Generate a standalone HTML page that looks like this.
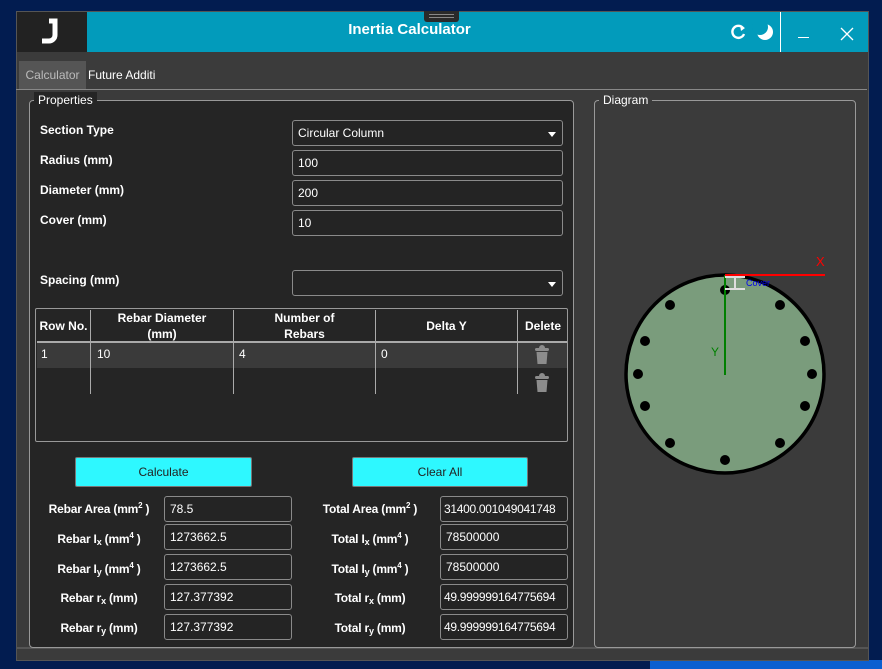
<!DOCTYPE html>
<html><head><meta charset="utf-8"><style>
*{box-sizing:border-box;margin:0;padding:0}
body{width:882px;height:669px;background:#021c50;position:relative;overflow:hidden;font-family:"Segoe UI","Liberation Sans",sans-serif;color:#fff}
.a{position:absolute}
.win{left:16px;top:11px;width:853px;height:650px;background:#3b3b3b;border:1px solid #555}
.lbl{font-size:12px;font-weight:bold;color:#fff}
.inp{position:absolute;border:1px solid #8a8a8a;border-radius:3px;background:#242424;font-size:12px;padding:0 5px;line-height:24px;height:26px;color:#fff}
.dd::after{content:"";position:absolute;right:6px;top:11px;border-left:4px solid transparent;border-right:4px solid transparent;border-top:5px solid #fff}
.btn{position:absolute;background:#2ef8ff;border:1px solid #777;border-radius:2px;color:#222;font-size:12px;text-align:center;line-height:28px;height:30px}
.r{text-align:center;font-size:12px;font-weight:bold;width:130px;letter-spacing:-0.2px}
.cell{position:absolute;font-size:12px}
.hdr{position:absolute;font-size:12px;font-weight:bold;text-align:center;line-height:16px}
sub{font-size:9px;vertical-align:-2px}sup{font-size:8px}
</style></head><body>
<div class="a" style="left:650px;top:660px;width:232px;height:9px;background:#0b5fd0"></div>
<div class="a win"></div>
<div class="a" style="left:17px;top:12px;width:70px;height:40px;background:#222"></div>
<svg class="a" style="left:38px;top:18px" width="24" height="28"><path d="M11 3h6v14a6 6 0 0 1-6 6H4" stroke="#fff" stroke-width="5" fill="none"/></svg>
<div class="a" style="left:87px;top:12px;width:781px;height:40px;background:#029bbb"></div>
<div class="a" style="left:424px;top:11px;width:35px;height:11px;background:#2a2a2a;border-radius:0 0 3px 3px"></div>
<div class="a" style="left:429px;top:14px;width:25px;height:1px;background:#888"></div>
<div class="a" style="left:429px;top:17px;width:25px;height:1px;background:#888"></div>
<div class="a" style="left:87px;top:21px;width:645px;text-align:center;font-size:15px;font-weight:bold">Inertia Calculator</div>
<svg class="a" style="left:728px;top:23px" width="50" height="18"><path d="M15 5 A6 6 0 1 0 16 11" stroke="#fff" stroke-width="2.4" fill="none"/><path d="M12 2 L17 5 L13 8Z" fill="#fff"/><circle cx="37" cy="9" r="8" fill="#fff"/><circle cx="32" cy="4" r="8" fill="#029bbb"/></svg>
<div class="a" style="left:780px;top:12px;width:1px;height:40px;background:#fff"></div>
<div class="a" style="left:798px;top:37px;width:11px;height:1px;background:#fff"></div>
<svg class="a" style="left:840px;top:27px" width="14" height="14"><path d="M1 1L13 13M13 1L1 13" stroke="#fff" stroke-width="1.3"/></svg>
<div class="a" style="left:19px;top:61px;width:67px;height:28px;background:#555;color:#bbb;font-size:12px;line-height:28px;text-align:center">Calculator</div>
<div class="a" style="left:88px;top:61px;font-size:12px;line-height:28px">Future Additi</div>
<div class="a" style="left:16px;top:89px;width:851px;height:1px;background:#888"></div>
<div class="a" style="left:17px;top:647px;width:851px;height:2px;background:#555"></div>
<div class="a" style="left:29px;top:100px;width:545px;height:548px;background:#252525;border:1px solid #999;border-radius:4px"></div>
<div class="a" style="left:34px;top:92px;background:#252525;padding:0 4px;font-size:12px;line-height:16px">Properties</div>
<div class="a lbl" style="left:40px;top:123px">Section Type</div>
<div class="a lbl" style="left:40px;top:153px">Radius (mm)</div>
<div class="a lbl" style="left:40px;top:183px">Diameter (mm)</div>
<div class="a lbl" style="left:40px;top:213px">Cover (mm)</div>
<div class="a lbl" style="left:40px;top:273px">Spacing (mm)</div>
<div class="inp dd" style="left:292px;top:120px;width:271px">Circular Column</div>
<div class="inp" style="left:292px;top:150px;width:271px">100</div>
<div class="inp" style="left:292px;top:180px;width:271px">200</div>
<div class="inp" style="left:292px;top:210px;width:271px">10</div>
<div class="inp dd" style="left:292px;top:270px;width:271px"></div>
<div class="a" style="left:35px;top:308px;width:533px;height:134px;border:1px solid #999;border-radius:2px"></div>
<div class="a" style="left:37px;top:341px;width:530px;height:2px;background:#aaa"></div>
<div class="a" style="left:37px;top:343px;width:530px;height:25px;background:#3a3a3a"></div>
<div class="a" style="left:90px;top:310px;width:1px;height:84px;background:#aaa"></div>
<div class="a" style="left:233px;top:310px;width:1px;height:84px;background:#aaa"></div>
<div class="a" style="left:375px;top:310px;width:1px;height:84px;background:#aaa"></div>
<div class="a" style="left:517px;top:310px;width:1px;height:84px;background:#aaa"></div>
<div class="hdr" style="left:37px;top:318px;width:53px">Row No.</div>
<div class="hdr" style="left:91px;top:310px;width:142px">Rebar Diameter<br>(mm)</div>
<div class="hdr" style="left:234px;top:310px;width:141px">Number of<br>Rebars</div>
<div class="hdr" style="left:376px;top:318px;width:141px">Delta Y</div>
<div class="hdr" style="left:518px;top:318px;width:50px">Delete</div>
<div class="cell" style="left:41px;top:347px">1</div>
<div class="cell" style="left:97px;top:347px">10</div>
<div class="cell" style="left:239px;top:347px">4</div>
<div class="cell" style="left:381px;top:347px">0</div>
<svg class="a" style="left:534px;top:344px" width="16" height="48"><g fill="#8c8c8c"><rect x="1" y="4" width="14" height="3" rx="1.5"/><path d="M5 4a3 3 0 0 1 6 0z"/><path d="M2.5 8h11l-1 12h-9z"/><rect x="1" y="32" width="14" height="3" rx="1.5"/><path d="M5 32a3 3 0 0 1 6 0z"/><path d="M2.5 36h11l-1 12h-9z"/></g></svg>
<div class="btn" style="left:75px;top:457px;width:177px">Calculate</div>
<div class="btn" style="left:352px;top:457px;width:176px">Clear All</div>
<div class="a r" style="left:34px;top:501px">Rebar Area (mm<sup>2</sup> )</div>
<div class="a r" style="left:34px;top:531px">Rebar I<sub>x</sub> (mm<sup>4</sup> )</div>
<div class="a r" style="left:34px;top:561px">Rebar I<sub>y</sub> (mm<sup>4</sup> )</div>
<div class="a r" style="left:34px;top:591px">Rebar r<sub>x</sub> (mm)</div>
<div class="a r" style="left:34px;top:621px">Rebar r<sub>y</sub> (mm)</div>
<div class="inp" style="left:164px;top:496px;width:128px">78.5</div>
<div class="inp" style="left:164px;top:524px;width:128px">1273662.5</div>
<div class="inp" style="left:164px;top:554px;width:128px">1273662.5</div>
<div class="inp" style="left:164px;top:584px;width:128px">127.377392</div>
<div class="inp" style="left:164px;top:614px;width:128px">127.377392</div>
<div class="a r" style="left:305px;top:501px">Total Area (mm<sup>2</sup> )</div>
<div class="a r" style="left:305px;top:531px">Total I<sub>x</sub> (mm<sup>4</sup> )</div>
<div class="a r" style="left:305px;top:561px">Total I<sub>y</sub> (mm<sup>4</sup> )</div>
<div class="a r" style="left:305px;top:591px">Total r<sub>x</sub> (mm)</div>
<div class="a r" style="left:305px;top:621px">Total r<sub>y</sub> (mm)</div>
<div class="inp" style="left:440px;top:496px;width:128px;padding:0 3px;letter-spacing:-0.3px">31400.001049041748</div>
<div class="inp" style="left:440px;top:524px;width:128px">78500000</div>
<div class="inp" style="left:440px;top:554px;width:128px">78500000</div>
<div class="inp" style="left:440px;top:584px;width:128px;padding:0 3px;letter-spacing:-0.3px">49.999999164775694</div>
<div class="inp" style="left:440px;top:614px;width:128px;padding:0 3px;letter-spacing:-0.3px">49.999999164775694</div>
<div class="a" style="left:594px;top:100px;width:262px;height:548px;border:1px solid #999;border-radius:4px"></div>
<div class="a" style="left:599px;top:92px;background:#3b3b3b;padding:0 4px;font-size:12px;line-height:16px">Diagram</div>
<svg class="a" style="left:594px;top:240px" width="262" height="240">
<circle cx="131" cy="134" r="99" fill="#7a9c7c" stroke="#000" stroke-width="3.5"/>
<g fill="#000">
<circle cx="131" cy="50" r="5"/><circle cx="131" cy="220" r="5"/>
<circle cx="44" cy="134" r="5"/><circle cx="218" cy="134" r="5"/>
<circle cx="76" cy="65" r="5"/><circle cx="186" cy="65" r="5"/>
<circle cx="51" cy="101" r="5"/><circle cx="211" cy="101" r="5"/>
<circle cx="51" cy="166" r="5"/><circle cx="211" cy="166" r="5"/>
<circle cx="76" cy="203" r="5"/><circle cx="186" cy="203" r="5"/>
</g>
<line x1="131" y1="35" x2="131" y2="135" stroke="#008000" stroke-width="2"/>
<line x1="131" y1="35" x2="231" y2="35" stroke="#f00" stroke-width="2"/>
<path d="M131 37h20M131 49h20M141 37v12" stroke="#ddd" stroke-width="2" fill="none"/>
<text x="152" y="46" font-size="9" fill="#0000ee" font-family="Liberation Sans,sans-serif">Cover</text>
<text x="222" y="26" font-size="13" fill="#f00" font-family="Liberation Sans,sans-serif">X</text>
<text x="117" y="116" font-size="12" fill="#008000" font-family="Liberation Sans,sans-serif">Y</text>
</svg>
</body></html>
